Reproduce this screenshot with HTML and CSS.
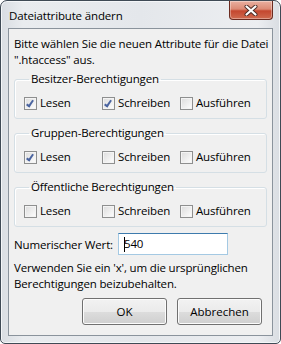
FILE: index.html
```html
<!DOCTYPE html>
<html>
<head>
    <title>Dateiattribute ändern</title>
    <link rel="stylesheet" href="styles.css">
</head>
<body>
    <div class="window">
        <div class="titlebar">
            <span class="title">Dateiattribute ändern</span>
            <div class="close">
                <svg width="16" height="11" viewBox="0 0 16 11">
                    <path d="M3.5 1.5 L12.5 9.5 M12.5 1.5 L3.5 9.5" stroke="#4a2a24" stroke-width="4" stroke-linecap="round"/>
                    <path d="M3.5 1.5 L12.5 9.5 M12.5 1.5 L3.5 9.5" stroke="#ffffff" stroke-width="2.2" stroke-linecap="round"/>
                </svg>
            </div>
        </div>

        <div class="client">
            <p class="intro">Bitte wählen Sie die neuen Attribute für die Datei<br>".htaccess" aus.</p>

            <fieldset class="group">
                <legend>Besitzer-Berechtigungen</legend>
                <div class="checks">
                    <label class="check"><span class="box checked"></span>Lesen</label>
                    <label class="check"><span class="box checked"></span>Schreiben</label>
                    <label class="check"><span class="box"></span>Ausführen</label>
                </div>
            </fieldset>

            <fieldset class="group">
                <legend>Gruppen-Berechtigungen</legend>
                <div class="checks">
                    <label class="check"><span class="box checked"></span>Lesen</label>
                    <label class="check"><span class="box"></span>Schreiben</label>
                    <label class="check"><span class="box"></span>Ausführen</label>
                </div>
            </fieldset>

            <fieldset class="group">
                <legend>Öffentliche Berechtigungen</legend>
                <div class="checks">
                    <label class="check"><span class="box"></span>Lesen</label>
                    <label class="check"><span class="box"></span>Schreiben</label>
                    <label class="check"><span class="box"></span>Ausführen</label>
                </div>
            </fieldset>

            <div class="numeric">
                <span class="numeric-label">Numerischer Wert:</span>
                <div class="input"><span class="caret"></span>540</div>
            </div>

            <p class="hint">Verwenden Sie ein 'x', um die ursprünglichen<br>Berechtigungen beizubehalten.</p>

            <div class="buttons">
                <button class="btn">OK</button>
                <button class="btn">Abbrechen</button>
            </div>
        </div>
    </div>
</body>
</html>
```

FILE: styles.css
```css
body { margin: 0; font-family: "Open Sans", sans-serif; font-size: 11.5px; letter-spacing: -0.15px; color: #000; background: #fff; }

.window { width: 281px; height: 344px; box-sizing: border-box; border: 1px solid #3f4a55; border-radius: 7px 7px 5px 5px; background: linear-gradient(to right, #d9dde2, #e9ecef 8%, #e4e7eb 50%, #eceef1 92%, #d9dde2); display: flex; flex-direction: column; box-shadow: inset 0 0 0 1px #f4f6f8; }

.titlebar { height: 27px; display: flex; justify-content: space-between; align-items: flex-start; padding-left: 8px; }
.title { margin-top: 7px; line-height: 16px; color: #000; }
.close { width: 44px; height: 19px; margin-right: 7px; box-sizing: border-box; border: 1px solid #6b2b20; border-top: none; border-radius: 0 0 4px 4px; background: linear-gradient(#eab0a0, #dc8a75 45%, #c4472f 55%, #cf6a4f); display: flex; align-items: center; justify-content: center; box-shadow: inset 0 0 0 1px rgba(255,255,255,0.35); }

.client { flex: 1; margin: 0 7px 7px; border: 1px solid #8a939c; background: #f0f0f0; padding: 0 5px; }

.intro { margin: 7px 0 3px; line-height: 16px; white-space: nowrap; }

.group { border: 1px solid #d5dfe5; border-radius: 3px; margin: 0 0 6px; padding: 8px 0 7px 9px; box-shadow: inset 1px 1px 0 #fff; }
.group legend { padding: 0 2px; margin-left: 5px; line-height: 16px; }

.checks { display: grid; grid-template-columns: 78px 78px 78px; }
.check { display: flex; align-items: center; line-height: 16px; white-space: nowrap; }
.box { flex: none; width: 13px; height: 13px; box-sizing: border-box; border: 1px solid #8e8f8f; background: linear-gradient(135deg, #dcdcdc, #f4f4f4 70%, #fff); margin-right: 3px; box-shadow: inset 0 0 0 1px #f4f4f4; position: relative; }
.box.checked::after { content: ""; position: absolute; left: 3px; top: 1px; width: 2px; height: 6px; border: solid #4a64a0; border-width: 0 2px 2px 0; transform: rotate(35deg); }

.numeric { display: flex; align-items: center; margin-top: 3px; }
.numeric-label { width: 104px; }
.input { width: 110px; height: 22px; box-sizing: border-box; border: 1px solid #a4c9e3; border-top-color: #3d7bad; background: #fff; padding-left: 5px; line-height: 20px; display: flex; align-items: center; }
.caret { width: 1px; height: 15px; background: #000; margin-right: -1px; }

.hint { margin: 5px 0 0; line-height: 16px; white-space: nowrap; }

.buttons { display: flex; justify-content: flex-end; gap: 10px; margin-top: 6px; padding-right: 5px; }
.btn { width: 85px; height: 27px; font-family: "Open Sans", sans-serif; font-size: 11.5px; color: #000; border: 1px solid #707070; border-radius: 3px; background: linear-gradient(#f2f2f2, #ebebeb 50%, #dddddd 50%, #cfcfcf); box-shadow: inset 0 0 0 1px #fcfcfc; }
```
